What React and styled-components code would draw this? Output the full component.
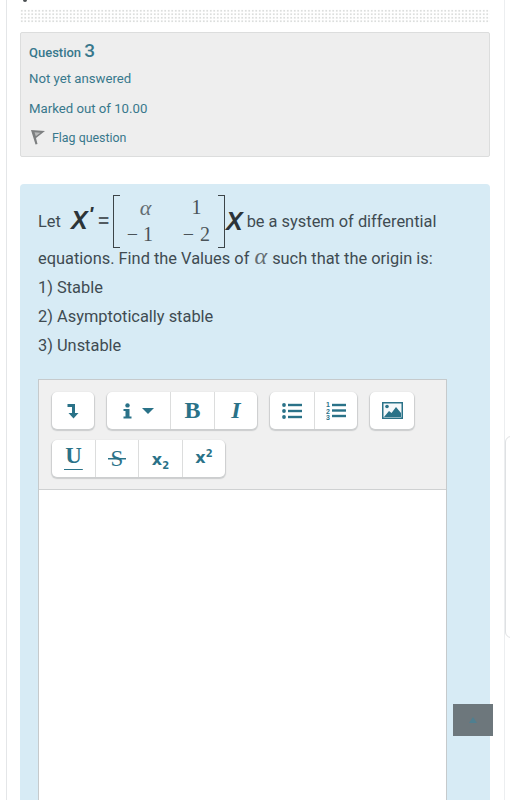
import React from 'react';
import styled, { createGlobalStyle } from 'styled-components';

const teal = '#2a7288';

const GlobalStyle = createGlobalStyle`
  html, body {
    margin: 0;
    padding: 0;
    background: #fff;
    height: 800px;
    overflow: hidden;
  }
  body {
    font-family: Roboto, "Liberation Sans", sans-serif;
  }
`;

const Page = styled.div`
  position: relative;
  width: 510px;
  height: 800px;
  overflow: hidden;
  background: #fff;
`;

const Frame = styled.div`
  margin-left: 6px;
  width: 499px;
  height: 800px;
  box-sizing: border-box;
  border-left: 1px solid #e4e6e8;
  border-right: 1px solid #eceef0;
  padding: 9px 14px 0 13px;
`;

const DotStrip = styled.div`
  height: 14px;
  background-image: radial-gradient(circle, #dcdedd 1px, transparent 1.2px);
  background-size: 3.5px 3.5px;
`;

const InfoBox = styled.div`
  margin-top: 9px;
  height: 125px;
  box-sizing: border-box;
  padding: 7px 8px 0;
  background: #eeeeee;
  border: 1px solid #dcdddd;
  border-radius: 2px;
  color: #38788c;
`;

const QuestionTitle = styled.div`
  font-size: 13px;
  font-weight: 500;
  line-height: 22px;
`;

const QuestionNumber = styled.span`
  font-size: 19px;
`;

const InfoLine = styled.div`
  margin-top: ${(p) => p.$top}px;
  font-size: 13.2px;
  line-height: 16px;
`;

const FlagRow = styled.div`
  display: flex;
  align-items: center;
  gap: 6px;
  margin-top: 12px;
  padding-left: 1px;
  font-size: 12.4px;
  line-height: 16px;
`;

const ContentBox = styled.div`
  margin-top: 27px;
  height: 640px;
  box-sizing: border-box;
  padding: 11px 18px 0;
  background: #d7ebf5;
  border-radius: 4px 4px 0 0;
  color: #3f4b52;
  font-size: 16.4px;
`;

const FormulaLine = styled.div`
  display: flex;
  align-items: center;
  height: 49px;
`;

const Let = styled.span`
  margin-top: 3px;
  margin-right: 10px;
`;

const MathVar = styled.span`
  font-family: "Liberation Sans", sans-serif;
  font-size: 25px;
  font-style: italic;
  font-weight: 700;
  color: #2c3438;
  line-height: 1;
  margin-top: ${(p) => p.$top}px;
`;

const Prime = styled.span`
  font-family: "Liberation Sans", sans-serif;
  font-size: 20px;
  font-style: italic;
  font-weight: 700;
  color: #2c3438;
  margin: -11px 4px 0 1px;
`;

const Equals = styled.span`
  font-size: 23px;
  line-height: 1;
  color: #525b60;
  margin-top: 3px;
  margin-right: 3px;
`;

const Matrix = styled.div`
  display: grid;
  grid-template-columns: 45px 63px;
  grid-template-rows: 25px 28px;
  flex: none;
  width: 113px;
  height: 53px;
  margin-top: 4px;
  box-sizing: border-box;
  padding-left: 7px;
  position: relative;
  font-family: "Liberation Serif", serif;
  font-size: 20px;
  color: #4a5358;
  &::before, &::after {
    content: '';
    position: absolute;
    top: 0;
    bottom: 0;
    width: 6px;
    border: 1.5px solid #3c4448;
  }
  &::before { left: 0; border-right: 0; }
  &::after { right: 1px; border-left: 0; }
`;

const Cell = styled.span`
  display: flex;
  align-items: center;
  justify-content: center;
  letter-spacing: ${(p) => p.$spacing || 0}px;
  margin-left: ${(p) => p.$shift || 0}px;
`;

const Alpha = styled.span`
  font-family: "Liberation Serif", serif;
  font-style: italic;
  color: #646d72;
  line-height: 0;
  font-size: ${(p) => p.$size}px;
  margin: 0 ${(p) => p.$side || 0}px 0 ${(p) => p.$side || 0}px;
`;

const MatrixAlpha = styled(Alpha)`
  margin-left: 6px;
`;

const RestOfLine = styled.span`
  margin-top: 3px;
  margin-left: 4px;
  white-space: nowrap;
`;

const TextLine = styled.div`
  line-height: 29px;
  height: 29px;
  white-space: nowrap;
`;

const Editor = styled.div`
  margin-top: 19px;
  width: 409px;
  height: 440px;
  box-sizing: border-box;
  background: #fff;
  border: 1px solid #c6cacc;
  border-bottom: 0;
`;

const Toolbar = styled.div`
  height: 110px;
  box-sizing: border-box;
  padding: 12px 0 0 13px;
  background: #f0f0f0;
  border-bottom: 1px solid #cfd1d2;
  display: flex;
  flex-direction: column;
  gap: 11px;
`;

const ToolRow = styled.div`
  display: flex;
  gap: 13px;
`;

const ButtonGroup = styled.div`
  display: flex;
  height: 37px;
  background: #fff;
  border-radius: 5px;
  box-shadow: 0 1px 1px 1px rgba(150, 155, 158, 0.4);
`;

const ToolButton = styled.div`
  display: flex;
  align-items: center;
  justify-content: center;
  box-sizing: border-box;
  gap: 10px;
  width: ${(p) => p.$w}px;
  color: ${teal};
  border-left: ${(p) => (p.$first ? '0' : '1px solid #dcdddd')};
  font-family: "Liberation Serif", serif;
  font-size: 24px;
  font-weight: 700;
`;

const ItalicLetter = styled.span`
  font-style: italic;
`;

const UnderlineLetter = styled.span`
  font-size: 23px;
  line-height: 22px;
  margin-top: -2px;
  padding: 0 1px 3px;
  background: linear-gradient(${teal}, ${teal}) bottom / 100% 1.5px no-repeat;
`;

const StrikeLetter = styled.span`
  font-size: 23px;
  line-height: 24px;
  font-weight: 400;
  padding: 0 3px;
  background: linear-gradient(${teal}, ${teal}) center / 100% 1.5px no-repeat;
`;

const ScriptLetter = styled.span`
  font-family: "DejaVu Sans", sans-serif;
  font-size: 16px;
  font-weight: 700;
  margin-top: ${(p) => p.$top}px;
  sub, sup { font-size: 10px; line-height: 0; }
`;

const ToTop = styled.div`
  position: absolute;
  left: 453px;
  top: 704px;
  width: 40px;
  height: 32px;
  display: flex;
  align-items: center;
  justify-content: center;
  background: #6d777c;
`;

const SideTab = styled.div`
  position: absolute;
  left: 505px;
  top: 436px;
  width: 20px;
  height: 202px;
  box-sizing: border-box;
  border: 1px solid #dfe1e3;
  border-radius: 6px;
  background: #fff;
`;

const CutOffMark = styled.div`
  position: absolute;
  left: 23px;
  top: 0;
  width: 4px;
  height: 2px;
  border-radius: 0 0 2px 2px;
  background: #4a4f52;
`;

const FlagIcon = () => (
  <svg width="16" height="17" viewBox="0 0 16 17">
    <path d="M1 1 L15 2 L6 9 L7.5 15 L5.5 15.5 Z" fill="#7d7f80" />
    <path d="M4.5 3.2 L10.5 3.7 L5.8 7.2 Z" fill="#b9baba" />
  </svg>
);

const BreakIcon = () => (
  <svg width="12" height="16" viewBox="0 0 12 16" fill={teal}>
    <path d="M0.5 1 H8 V10 H11.5 L6.5 15.5 L1.5 10 H5 V4 H0.5 Z" />
  </svg>
);

const InfoIcon = () => (
  <svg width="9" height="16" viewBox="0 0 9 16" fill={teal}>
    <circle cx="4.5" cy="2.4" r="2.2" />
    <path d="M0.5 6 H6.5 V13.5 H8.5 V15.5 H0.5 V13.5 H2.5 V8 H0.5 Z" />
  </svg>
);

const Caret = () => (
  <svg width="12" height="6" viewBox="0 0 12 6" fill={teal}>
    <path d="M0 0 H12 L6 6 Z" />
  </svg>
);

const BulletIcon = () => (
  <svg width="20" height="16" viewBox="0 0 20 16" fill={teal}>
    <circle cx="2" cy="2" r="1.9" />
    <circle cx="2" cy="8" r="1.9" />
    <circle cx="2" cy="14" r="1.9" />
    <rect x="6" y="0.8" width="14" height="2.4" />
    <rect x="6" y="6.8" width="14" height="2.4" />
    <rect x="6" y="12.8" width="14" height="2.4" />
  </svg>
);

const NumberIcon = () => (
  <svg width="20" height="20" viewBox="0 0 20 20" fill={teal}>
    <text x="0" y="6" fontSize="7" fontWeight="700" fontFamily="Liberation Sans">1</text>
    <text x="0" y="12.5" fontSize="7" fontWeight="700" fontFamily="Liberation Sans">2</text>
    <text x="0" y="19" fontSize="7" fontWeight="700" fontFamily="Liberation Sans">3</text>
    <rect x="6" y="2.8" width="14" height="2.4" />
    <rect x="6" y="8.3" width="14" height="2.4" />
    <rect x="6" y="13.8" width="14" height="2.4" />
  </svg>
);

const ImageIcon = () => (
  <svg width="21" height="17" viewBox="0 0 21 17">
    <rect x="0.75" y="0.75" width="19.5" height="15.5" fill="#f4f8fa" stroke={teal} strokeWidth="1.5" />
    <circle cx="5" cy="4.5" r="1.8" fill={teal} />
    <path d="M2 15 L7 9 L9.5 11 L14 5 L19 11 V15 Z" fill={teal} />
  </svg>
);

const UpChevron = () => (
  <svg width="8" height="6" viewBox="0 0 8 6" fill="#4f7f90">
    <path d="M4 0 L8 6 H0 Z" />
  </svg>
);

const App = () => {
  return (
    <Page>
      <GlobalStyle />
      <CutOffMark />
      <Frame>
        <DotStrip />
        <InfoBox>
          <QuestionTitle>
            Question <QuestionNumber>3</QuestionNumber>
          </QuestionTitle>
          <InfoLine $top={7}>Not yet answered</InfoLine>
          <InfoLine $top={14}>Marked out of 10.00</InfoLine>
          <FlagRow>
            <FlagIcon />
            <span>Flag question</span>
          </FlagRow>
        </InfoBox>
        <ContentBox>
          <FormulaLine>
            <Let>Let</Let>
            <MathVar $top={2}>X</MathVar>
            <Prime>'</Prime>
            <Equals>=</Equals>
            <Matrix>
              <Cell><MatrixAlpha $size={22}>α</MatrixAlpha></Cell>
              <Cell>1</Cell>
              <Cell $spacing={5}>−1</Cell>
              <Cell $spacing={6} $shift={6}>−2</Cell>
            </Matrix>
            <MathVar $top={3}>X</MathVar>
            <RestOfLine>be a system of differential</RestOfLine>
          </FormulaLine>
          <TextLine>
            equations. Find the Values of <Alpha $size={24} $side={1}>α</Alpha> such that the origin is:
          </TextLine>
          <TextLine>1) Stable</TextLine>
          <TextLine>2) Asymptotically stable</TextLine>
          <TextLine>3) Unstable</TextLine>
          <Editor>
            <Toolbar>
              <ToolRow>
                <ButtonGroup>
                  <ToolButton $first $w={42}><BreakIcon /></ToolButton>
                </ButtonGroup>
                <ButtonGroup>
                  <ToolButton $first $w={63}><InfoIcon /><Caret /></ToolButton>
                  <ToolButton $w={44}>B</ToolButton>
                  <ToolButton $w={43}><ItalicLetter>I</ItalicLetter></ToolButton>
                </ButtonGroup>
                <ButtonGroup>
                  <ToolButton $first $w={44}><BulletIcon /></ToolButton>
                  <ToolButton $w={43}><NumberIcon /></ToolButton>
                </ButtonGroup>
                <ButtonGroup>
                  <ToolButton $first $w={44}><ImageIcon /></ToolButton>
                </ButtonGroup>
              </ToolRow>
              <ToolRow>
                <ButtonGroup>
                  <ToolButton $first $w={43}><UnderlineLetter>U</UnderlineLetter></ToolButton>
                  <ToolButton $w={43}><StrikeLetter>S</StrikeLetter></ToolButton>
                  <ToolButton $w={44}><ScriptLetter $top={2}>x<sub>2</sub></ScriptLetter></ToolButton>
                  <ToolButton $w={43}><ScriptLetter $top={-2}>x<sup>2</sup></ScriptLetter></ToolButton>
                </ButtonGroup>
              </ToolRow>
            </Toolbar>
          </Editor>
        </ContentBox>
      </Frame>
      <SideTab />
      <ToTop><UpChevron /></ToTop>
    </Page>
  );
};

export default App;
